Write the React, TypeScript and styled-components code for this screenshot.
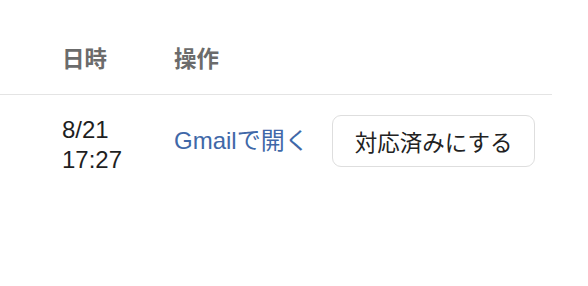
import React from 'react';
import styled, { createGlobalStyle } from 'styled-components';

const GlobalStyle = createGlobalStyle`
  html, body {
    margin: 0;
    padding: 0;
    background: #ffffff;
  }
  body {
    font-family: "Liberation Sans", "Noto Sans CJK JP", sans-serif;
    color: #222222;
  }
`;

type Row = {
  id: number;
  date: string;
  time: string;
};

const rows: Row[] = [{ id: 1, date: '8/21', time: '17:27' }];

export default function App() {
  return (
    <Page>
      <GlobalStyle />
      <Table>
        <colgroup>
          <col style={{ width: 46 }} />
          <col style={{ width: 112 }} />
          <col />
        </colgroup>
        <thead>
          <tr>
            <HeadCell />
            <HeadCell>日時</HeadCell>
            <HeadCell>操作</HeadCell>
          </tr>
        </thead>
        <tbody>
          {rows.map((row) => (
            <tr key={row.id}>
              <BodyCell />
              <BodyCell>
                <DateText>
                  {row.date}
                  <br />
                  {row.time}
                </DateText>
              </BodyCell>
              <BodyCell>
                <Actions>
                  <MailLink href="#">Gmailで開く</MailLink>
                  <DoneButton type="button">対応済みにする</DoneButton>
                </Actions>
              </BodyCell>
            </tr>
          ))}
        </tbody>
      </Table>
    </Page>
  );
}

const Page = styled.div`
  width: 588px;
  height: 286px;
  padding-top: 27px;
  box-sizing: border-box;
  overflow: hidden;
`;

const Table = styled.table`
  width: 552px;
  border-collapse: collapse;
  table-layout: fixed;
`;

const HeadCell = styled.th`
  padding: 18px 16px 19px;
  text-align: left;
  font-size: 22.5px;
  line-height: 30px;
  font-weight: 700;
  color: #6b6b6b;
  border-bottom: 1.5px solid #e4e4e4;
`;

const BodyCell = styled.td`
  padding: 20px 16px;
  vertical-align: top;
  font-size: 22.5px;
  line-height: 30px;
`;

const DateText = styled.div`
  color: #1f1f1f;
  font-size: 24px;
  line-height: 30px;
`;

const Actions = styled.div`
  display: flex;
  align-items: center;
  gap: 23px;
  white-space: nowrap;
`;

const MailLink = styled.a`
  color: #4068a8;
  text-decoration: none;
  font-size: 24px;
`;

const DoneButton = styled.button`
  display: inline-flex;
  align-items: center;
  height: 52px;
  padding: 0 22px;
  box-sizing: border-box;
  background: #ffffff;
  border: 1.5px solid #dedede;
  border-radius: 9px;
  font-family: inherit;
  font-size: 22.5px;
  color: #222222;
  cursor: pointer;
`;
